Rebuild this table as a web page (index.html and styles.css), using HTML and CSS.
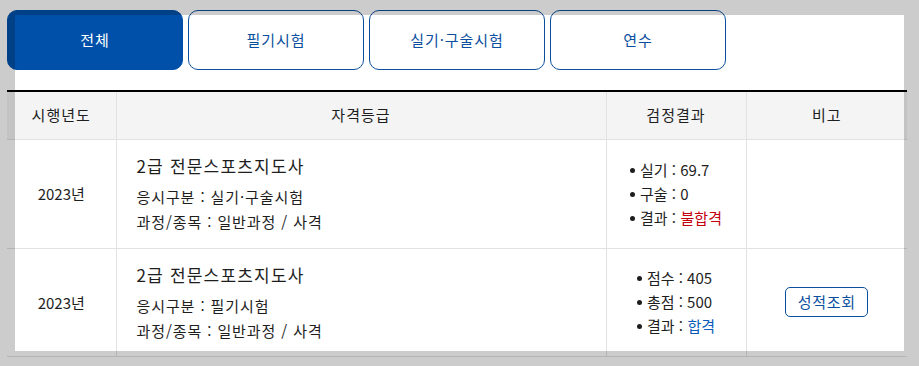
FILE: index.html
```html
<!DOCTYPE html>
<html lang="ko">
<head>
<meta charset="utf-8">
<title>검정결과</title>
<link rel="stylesheet" href="styles.css">
</head>
<body>
<div class="page">
  <nav class="tabs">
    <button class="tab active">전체</button>
    <button class="tab">필기시험</button>
    <button class="tab">실기·구술시험</button>
    <button class="tab">연수</button>
  </nav>
  <table class="result">
    <colgroup>
      <col class="c1"><col class="c2"><col class="c3"><col class="c4">
    </colgroup>
    <thead>
      <tr><th>시행년도</th><th>자격등급</th><th>검정결과</th><th>비고</th></tr>
    </thead>
    <tbody>
      <tr>
        <td class="year">2023년</td>
        <td class="info">
          <p class="title">2급 전문스포츠지도사</p>
          <p class="line first">응시구분 : 실기·구술시험</p>
          <p class="line">과정/종목 : 일반과정 / 사격</p>
        </td>
        <td class="score">
          <ul>
            <li>실기 : 69.7</li>
            <li>구술 : 0</li>
            <li>결과 : <span class="fail">불합격</span></li>
          </ul>
        </td>
        <td class="note"></td>
      </tr>
      <tr>
        <td class="year">2023년</td>
        <td class="info">
          <p class="title">2급 전문스포츠지도사</p>
          <p class="line first">응시구분 : 필기시험</p>
          <p class="line">과정/종목 : 일반과정 / 사격</p>
        </td>
        <td class="score">
          <ul>
            <li>점수 : 405</li>
            <li>총점 : 500</li>
            <li>결과 : <span class="pass">합격</span></li>
          </ul>
        </td>
        <td class="note"><button class="btn">성적조회</button></td>
      </tr>
    </tbody>
  </table>
</div>
<div class="focus"></div>
</body>
</html>
```
FILE: styles.css
```css
* { box-sizing: border-box; }
html, body {
  margin: 0;
  background: #fff;
  font-family: "Noto Sans CJK KR", "Noto Sans", sans-serif;
  color: #1e1e1e;
}
.page {
  padding: 10px 12px 0 7px;
  width: 919px;
}
.tabs {
  display: flex;
  gap: 5px;
  margin-bottom: 20px;
}
.tab {
  width: 176px;
  height: 60px;
  border: 1px solid #0b4f9e;
  border-radius: 10px;
  background: #fff;
  color: #0b4f9e;
  font-family: inherit;
  font-size: 15px;
  letter-spacing: 0.06em;
  line-height: 20px;
  padding: 0;
  cursor: pointer;
}
.tab.active {
  background: #0050a9;
  border-color: #0050a9;
  color: #fff;
}
.result {
  width: 900px;
  border-collapse: collapse;
  border-top: 2px solid #000;
  table-layout: fixed;
}
.c1 { width: 109px; }
.c2 { width: 490px; }
.c3 { width: 140px; }
.c4 { width: 161px; }
.result th {
  height: 48px;
  background: #f4f4f4;
  font-weight: normal;
  font-size: 15px;
  letter-spacing: 0.07em;
  line-height: 20px;
  padding: 0;
  border-bottom: 1px solid #e2e2e2;
  border-left: 1px solid #e2e2e2;
}
.result th:first-child, .result td:first-child { border-left: none; }
.result td {
  border-bottom: 1px solid #e2e2e2;
  border-left: 1px solid #e2e2e2;
  vertical-align: middle;
  font-size: 15px;
  padding: 0;
}
.result tbody tr:first-child td { height: 109px; }
.result tbody tr:last-child td { height: 108px; }
.year { text-align: center; }
.info { padding: 0 20px !important; }
.info p { margin: 0; }
.title {
  font-size: 17px;
  line-height: 26px;
  letter-spacing: 0.07em;
}
.line {
  font-size: 15px;
  line-height: 25px;
  letter-spacing: 0.06em;
}
.line.first { margin-top: 5px; }
.score { text-align: center; }
.score ul {
  display: inline-block;
  list-style: none;
  margin: 0;
  padding: 0;
  text-align: left;
}
.score li {
  display: flex;
  align-items: center;
  line-height: 24px;
  font-size: 15px;
}
.score li::before {
  content: "";
  flex: none;
  width: 5px;
  height: 5px;
  border-radius: 50%;
  background: #1e1e1e;
  margin: 1px 5px 0 0;
}
.score li span { margin-left: 0.3em; }
.fail { color: #c4000f; }
.pass { color: #0a5cb8; }
.note { text-align: center; }
.btn {
  width: 83px;
  height: 30px;
  border: 1px solid #0b4f9e;
  border-radius: 5px;
  background: #fff;
  color: #0b4f9e;
  font-family: inherit;
  font-size: 15px;
  letter-spacing: 0.05em;
  padding: 0;
  line-height: 20px;
}
.focus {
  position: absolute;
  left: 15px;
  top: 15px;
  width: 889px;
  height: 336px;
  box-shadow: 0 0 0 2000px rgba(0, 0, 0, 0.2);
  pointer-events: none;
}
```
